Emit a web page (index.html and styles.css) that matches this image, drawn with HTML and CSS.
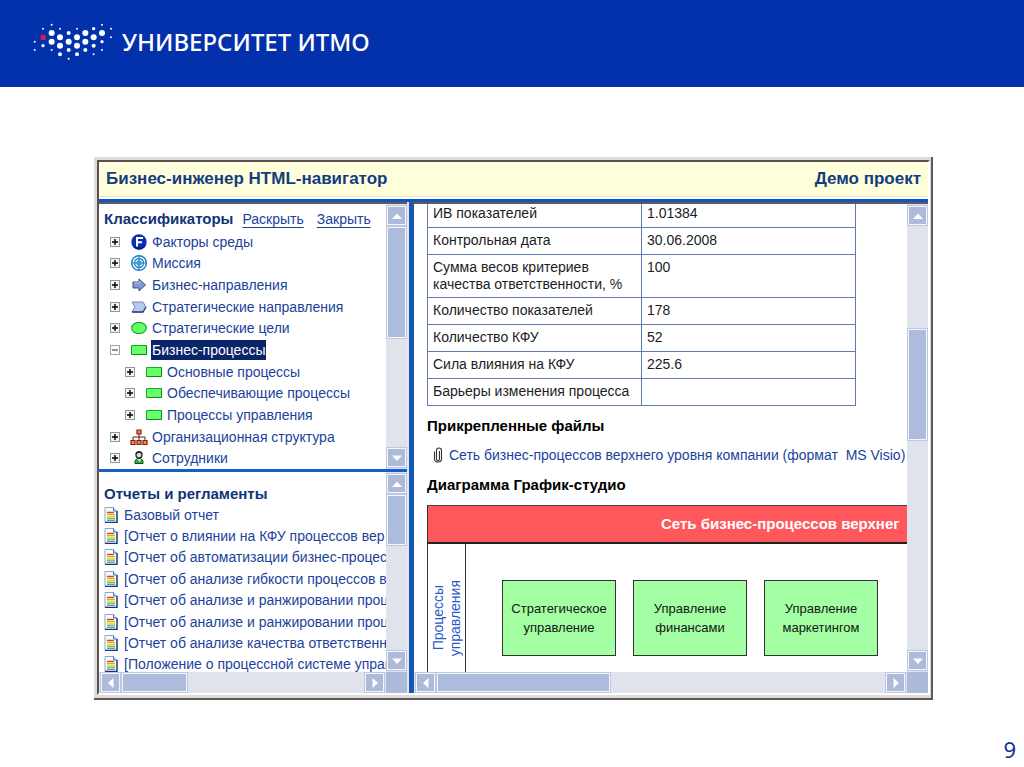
FILE: index.html
```html
<!DOCTYPE html>
<html lang="ru">
<head>
<meta charset="utf-8">
<title>Университет ИТМО</title>
<link rel="stylesheet" href="styles.css">
</head>
<body>
<svg class="sprite" aria-hidden="true">
  <symbol id="plus" viewBox="0 0 10 10"><rect x=".5" y=".5" width="9" height="9" fill="#f4f4f0" stroke="#8c98ac"/><path d="M2 5h6M5 2v6" stroke="#000" stroke-width="1.4"/></symbol>
  <symbol id="minus" viewBox="0 0 10 10"><rect x=".5" y=".5" width="9" height="9" fill="#fbfbf8" stroke="#9aa6b8"/><path d="M2 5h6" stroke="#333"/></symbol>
  <symbol id="factor" viewBox="0 0 18 18"><circle cx="9" cy="9" r="7.7" fill="#0a2fb4"/><path d="M4 13.500a7 7 0 0 0 11-1" fill="none" stroke="#04186e" stroke-width="1.500"/><path d="M7 13.500V5h6M7 9.200h5" fill="none" stroke="#fff" stroke-width="2"/></symbol>
  <symbol id="mission" viewBox="0 0 18 18"><g fill="none" stroke="#1e84c4"><circle cx="9" cy="9" r="7.300" stroke-width="1.500"/><circle cx="9" cy="9" r="4.500" fill="#c8e8f6" stroke-width="1.300"/><circle cx="9" cy="9" r="2"/><path d="M9 1v16M1 9h16"/></g></symbol>
  <symbol id="arrow" viewBox="0 0 18 18"><path d="M3 6h6V3l6.500 6L9 15v-3H3z" fill="#7d9bd0" stroke="#3a4f80"/><path d="M4 7h6V5" fill="none" stroke="#b9caea"/></symbol>
  <symbol id="chevron" viewBox="0 0 18 18"><path d="M2 4h11l3 5-3 5H2l3-5z" fill="#b4c8f0" stroke="#7488b4"/><path d="M2 14h11l3-5" fill="none" stroke="#28407c" stroke-width="1.300"/></symbol>
  <symbol id="goal" viewBox="0 0 18 18"><ellipse cx="9" cy="9" rx="7.300" ry="5.600" fill="#66ff66" stroke="#16a82c" stroke-width="1.200"/></symbol>
  <symbol id="process" viewBox="0 0 18 18"><path d="M1.500 4.500h15v9h-15z" fill="#66ff66" stroke="#16a82c"/><path d="M1.500 13.500h15v-9" fill="none" stroke="#0a8c1c"/></symbol>
  <symbol id="org" viewBox="0 0 18 18"><path d="M9 6v3M3 12V9h12v3M9 9v3" fill="none" stroke="#5a2015"/><g fill="#f0903c" stroke="#8c1c10" stroke-width="1.200"><path d="M7 2h4v4H7zM1 12.500h4v4H1zM7 12.500h4v4H7zM13 12.500h4v4h-4z"/></g></symbol>
  <symbol id="person" viewBox="0 0 18 18"><path d="M5 14.500c-.5-3 1-5 4-5s4.500 2 4 5z" fill="#2faa3c" stroke="#14481c"/><path d="M7 10l3 3 1-3z" fill="#d6f5d4"/><circle cx="9" cy="6" r="3" fill="#dedbd4" stroke="#2a2a2a" stroke-width="1.300"/><path d="M6 5c1-3 5-3 6 0" fill="none" stroke="#222" stroke-width="1.400"/></symbol>
  <symbol id="doc" viewBox="0 0 14 16"><path d="M1 .500h8.500l3.500 3.500v11.500H1z" fill="#f7fcff" stroke="#86a8cc"/><path d="M1 15.500h12V4" fill="none" stroke="#13346e" stroke-width="1.300"/><path d="M9.500 .500V4H13" fill="#cfe4f4" stroke="#3c78b4"/><path d="M3 5.500h7" stroke="#d8402c" stroke-width="1.500"/><path d="M3 7.500h8" stroke="#f09a50"/><path d="M3 9.200h8" stroke="#d8f020" stroke-width="1.700"/><path d="M3 11.200h8" stroke="#64c040" stroke-width="1.300"/><path d="M3 13.200h8" stroke="#4060a0"/></symbol>
  <symbol id="clip" viewBox="0 0 10 16"><path d="M6.500 4v8a1.500 1.500 0 0 1-3 0V3.500a2.500 2.500 0 0 1 5 0V12c0 4-7 4-7 0V4.500" fill="none" stroke="#333" stroke-width="1.100"/></symbol>
  <symbol id="up" viewBox="0 0 12 12"><path d="M1 9L6 3.500l5 5.500z" fill="#fff"/></symbol>
  <symbol id="down" viewBox="0 0 12 12"><path d="M1 3.500L6 9l5-5.500z" fill="#fff"/></symbol>
  <symbol id="left" viewBox="0 0 12 12"><path d="M8.500 1L3 6l5.500 5z" fill="#fff"/></symbol>
  <symbol id="right" viewBox="0 0 12 12"><path d="M3.500 1L9 6l-5.500 5z" fill="#fff"/></symbol>
</svg>

<div class="slide">
  <header class="brand">
    <svg class="brand-mark" viewBox="99 69 240 120" fill="#fff" aria-hidden="true">
      <rect x="122" y="108" width="15" height="15" rx="2" fill="#d8174a"/>
      <circle cx="104" cy="128" r="3"/><circle cx="104" cy="153" r="3"/>
      <circle cx="129" cy="89" r="3"/><circle cx="129" cy="140" r="5"/>
      <circle cx="155" cy="77" r="3"/><circle cx="155" cy="102" r="9"/><circle cx="155" cy="128" r="9"/><circle cx="155" cy="153" r="3"/>
      <circle cx="180" cy="89" r="3"/><circle cx="180" cy="115" r="9"/><circle cx="180" cy="140" r="9"/><circle cx="180" cy="166" r="6"/>
      <circle cx="206" cy="102" r="6"/><circle cx="206" cy="128" r="9"/><circle cx="206" cy="153" r="6"/><circle cx="206" cy="179" r="3"/>
      <circle cx="231" cy="89" r="3"/><circle cx="231" cy="115" r="9"/><circle cx="231" cy="140" r="9"/><circle cx="231" cy="166" r="6"/>
      <circle cx="256" cy="102" r="9"/><circle cx="256" cy="128" r="9"/><circle cx="256" cy="153" r="6"/>
      <circle cx="281" cy="89" r="5"/><circle cx="281" cy="115" r="9"/><circle cx="281" cy="140" r="6"/><circle cx="281" cy="166" r="3"/>
      <circle cx="306" cy="77" r="3"/><circle cx="306" cy="102" r="9"/><circle cx="306" cy="128" r="5"/><circle cx="306" cy="153" r="3"/>
      <circle cx="333" cy="89" r="3"/><circle cx="333" cy="115" r="3"/>
    </svg>
    <span class="brand-name">УНИВЕРСИТЕТ ИТМО</span>
  </header>

  <main class="stage">
    <div class="window">
      <div class="app">
        <div class="titlebar">
          <h1>Бизнес-инженер HTML-навигатор</h1>
          <span>Демо проект</span>
        </div>
        <div class="workspace">
          <div class="sidebar">
            <section class="pane classifiers">
              <div class="pane-body">
                <div class="pane-head">
                  <h2>Классификаторы</h2>
                  <a href="#">Раскрыть</a>
                  <a href="#">Закрыть</a>
                </div>
                <ul class="tree">
                  <li><button class="toggle" aria-label="Развернуть"><svg><use href="#plus"/></svg></button><svg class="icon"><use href="#factor"/></svg><a href="#">Факторы среды</a></li>
                  <li><button class="toggle" aria-label="Развернуть"><svg><use href="#plus"/></svg></button><svg class="icon"><use href="#mission"/></svg><a href="#">Миссия</a></li>
                  <li><button class="toggle" aria-label="Развернуть"><svg><use href="#plus"/></svg></button><svg class="icon"><use href="#arrow"/></svg><a href="#">Бизнес-направления</a></li>
                  <li><button class="toggle" aria-label="Развернуть"><svg><use href="#plus"/></svg></button><svg class="icon"><use href="#chevron"/></svg><a href="#">Стратегические направления</a></li>
                  <li><button class="toggle" aria-label="Развернуть"><svg><use href="#plus"/></svg></button><svg class="icon"><use href="#goal"/></svg><a href="#">Стратегические цели</a></li>
                  <li><button class="toggle" aria-label="Свернуть"><svg><use href="#minus"/></svg></button><svg class="icon"><use href="#process"/></svg><a href="#" class="selected">Бизнес-процессы</a></li>
                  <li class="child"><button class="toggle" aria-label="Развернуть"><svg><use href="#plus"/></svg></button><svg class="icon"><use href="#process"/></svg><a href="#">Основные процессы</a></li>
                  <li class="child"><button class="toggle" aria-label="Развернуть"><svg><use href="#plus"/></svg></button><svg class="icon"><use href="#process"/></svg><a href="#">Обеспечивающие процессы</a></li>
                  <li class="child"><button class="toggle" aria-label="Развернуть"><svg><use href="#plus"/></svg></button><svg class="icon"><use href="#process"/></svg><a href="#">Процессы управления</a></li>
                  <li><button class="toggle" aria-label="Развернуть"><svg><use href="#plus"/></svg></button><svg class="icon"><use href="#org"/></svg><a href="#">Организационная структура</a></li>
                  <li><button class="toggle" aria-label="Развернуть"><svg><use href="#plus"/></svg></button><svg class="icon"><use href="#person"/></svg><a href="#">Сотрудники</a></li>
                </ul>
              </div>
              <div class="bar vertical">
                <button aria-label="Вверх"><svg><use href="#up"/></svg></button>
                <div class="thumb thumb-tree"></div>
                <button class="end" aria-label="Вниз"><svg><use href="#down"/></svg></button>
              </div>
            </section>

            <section class="pane reports">
              <div class="pane-body">
                <div class="pane-head"><h2>Отчеты и регламенты</h2></div>
                <ul class="files">
                  <li><svg class="doc"><use href="#doc"/></svg><a href="#">Базовый отчет</a></li>
                  <li><svg class="doc"><use href="#doc"/></svg><a href="#">[Отчет о влиянии на КФУ процессов вер</a></li>
                  <li><svg class="doc"><use href="#doc"/></svg><a href="#">[Отчет об автоматизации бизнес-процесс</a></li>
                  <li><svg class="doc"><use href="#doc"/></svg><a href="#">[Отчет об анализе гибкости процессов ве</a></li>
                  <li><svg class="doc"><use href="#doc"/></svg><a href="#">[Отчет об анализе и ранжировании проце</a></li>
                  <li><svg class="doc"><use href="#doc"/></svg><a href="#">[Отчет об анализе и ранжировании проце</a></li>
                  <li><svg class="doc"><use href="#doc"/></svg><a href="#">[Отчет об анализе качества ответственно</a></li>
                  <li><svg class="doc"><use href="#doc"/></svg><a href="#">[Положение о процессной системе управ</a></li>
                </ul>
              </div>
              <div class="bar vertical">
                <button aria-label="Вверх"><svg><use href="#up"/></svg></button>
                <div class="thumb thumb-reports"></div>
                <button class="end" aria-label="Вниз"><svg><use href="#down"/></svg></button>
              </div>
              <div class="bar horizontal">
                <button aria-label="Влево"><svg><use href="#left"/></svg></button>
                <div class="thumb thumb-side"></div>
                <button class="end" aria-label="Вправо"><svg><use href="#right"/></svg></button>
              </div>
              <div class="corner"></div>
            </section>
          </div>

          <section class="pane details">
            <div class="pane-body">
              <table class="props">
                <tr><th scope="row">ИВ показателей</th><td>1.01384</td></tr>
                <tr><th scope="row">Контрольная дата</th><td>30.06.2008</td></tr>
                <tr><th scope="row">Сумма весов критериев<br>качества ответственности, %</th><td>100</td></tr>
                <tr><th scope="row">Количество показателей</th><td>178</td></tr>
                <tr><th scope="row">Количество КФУ</th><td>52</td></tr>
                <tr><th scope="row">Сила влияния на КФУ</th><td>225.6</td></tr>
                <tr><th scope="row">Барьеры изменения процесса</th><td></td></tr>
              </table>
              <h3>Прикрепленные файлы</h3>
              <div class="attachment"><svg class="clip"><use href="#clip"/></svg><a href="#">Сеть бизнес-процессов верхнего уровня компании (формат&nbsp; MS Visio)</a></div>
              <h3>Диаграмма График-студио</h3>
              <div class="diagram">
                <div class="diagram-title">Сеть бизнес-процессов верхнег</div>
                <div class="lane">
                  <div class="lane-name"><span>Процессы<br>управления</span></div>
                  <div class="node">Стратегическое<br>управление</div>
                  <div class="node">Управление<br>финансами</div>
                  <div class="node">Управление<br>маркетингом</div>
                </div>
              </div>
            </div>
            <div class="bar vertical">
              <button aria-label="Вверх"><svg><use href="#up"/></svg></button>
              <div class="thumb thumb-details"></div>
              <button class="end" aria-label="Вниз"><svg><use href="#down"/></svg></button>
            </div>
            <div class="bar horizontal">
              <button aria-label="Влево"><svg><use href="#left"/></svg></button>
              <div class="thumb thumb-wide"></div>
              <button class="end" aria-label="Вправо"><svg><use href="#right"/></svg></button>
            </div>
            <div class="corner"></div>
          </section>
        </div>
      </div>
    </div>
  </main>
  <footer class="page-number">9</footer>
</div>
</body>
</html>
```
FILE: styles.css
```css
* { box-sizing: border-box; }
body { margin: 0; background: #fff; font-family: "Liberation Sans", Arial, sans-serif; }
h1, h2, h3, ul { margin: 0; padding: 0; }
ul { list-style: none; }
a { color: #1c429c; text-decoration: none; }
button { padding: 0; border: 0; background: none; }
svg { display: block; flex: none; }
.sprite { display: none; }

.slide { display: flex; flex-direction: column; min-height: 100vh; }
.brand { display: flex; align-items: center; gap: 9px; height: 87px; padding: 0 33px 3px; background: #0330ab; color: #fff; }
.brand-mark { width: 80px; height: 40px; }
.brand-name { font: 500 24px/32px "Noto Sans", sans-serif; }
.stage { flex: 1; padding: 70px 91px 0 94px; }
.page-number { padding: 0 8px 4px; text-align: right; font: 22px/28px "Noto Sans", sans-serif; color: #12309c; }

.window { padding: 3px 1px 3px 3px; background: #dedbd8; border-right: 2px solid #5c5858; border-bottom: 2px solid #5c5858; }
.app { border: 2px solid #5a5252; border-right-color: #fff; border-bottom-color: #fff; background: #fff; }
.titlebar { display: flex; align-items: center; justify-content: space-between; height: 35px; padding: 0 7px; background: #ffffdb; border-bottom: 1px solid #e4e4d8; color: #123c80; font-size: 17px; font-weight: bold; }
.titlebar h1 { font-size: 17px; }
.workspace { display: grid; grid-template-columns: 310px minmax(0, 1fr); border-top: 3px solid #0f56c0; margin-top: 2px; }
.sidebar { display: grid; grid-template-rows: 267px minmax(0, 1fr); border-right: 2px solid #e4e8f2; }

.pane { display: grid; grid-template-columns: minmax(0, 1fr) 21px; grid-template-rows: minmax(0, 1fr); border-top: 2px solid #5a5a62; min-width: 0; }
.reports, .details { grid-template-rows: minmax(0, 1fr) 21px; }
.reports { border-top: 3px solid #0f62cc; }
.details { height: 491px; border-left: 5px solid #1458b4; }
.pane-body { display: flex; flex-direction: column; min-width: 0; overflow: hidden; }
.sidebar .pane-body { padding-left: 5px; font-size: 14px; white-space: nowrap; }
.pane-head { display: flex; align-items: center; gap: 13px; flex: none; height: 27px; padding-top: 2px; }
.pane-head h2 { font-size: 15px; color: #0f3578; }
.pane-head h2 + a { margin-left: -4px; }
.pane-head a { text-decoration: underline; text-underline-offset: 3px; }

.tree { display: grid; flex: 1; grid-auto-rows: minmax(0, 1fr); padding-left: 6px; }
.tree li, .files li { display: flex; align-items: center; }
.tree .child { padding-left: 15px; }
.toggle svg { width: 10px; height: 10px; }
.tree .icon { width: 18px; height: 18px; margin: 0 3px 0 10px; }
.tree a { padding: 2px 1px; line-height: 16px; }
.tree .selected { background: #0a246a; color: #fff; }

.reports .pane-head { height: 32px; padding-top: 10px; }
.files { display: grid; flex: 1; grid-auto-rows: minmax(0, 1fr); margin-bottom: -3px; }
.doc { width: 14px; height: 16px; margin-right: 6px; }

.bar { display: flex; background: #e0e3ec; }
.vertical { flex-direction: column; padding: 1px 0; }
.horizontal { padding: 0 1px; }
.bar button { display: flex; align-items: center; justify-content: center; width: 19px; height: 19px; flex: none; background: #adbad9; border: 1px solid #f4f6fb; outline: 1px solid #bcc8e0; margin: 1px; }
.bar button svg { width: 12px; height: 12px; }
.bar .end { margin-top: auto; }
.horizontal .end { margin: 1px 1px 1px auto; }
.thumb { flex: none; background: #adbbdc; border: 1px solid #f4f6fb; outline: 1px solid #bcc8e0; margin: 1px; }
.thumb-tree { height: 111px; }
.thumb-reports { height: 50px; }
.thumb-side { width: 65px; }
.thumb-details { height: 111px; margin-top: 103px; }
.thumb-wide { width: 173px; }
.corner { background: #adbad9; }

.details .pane-body { padding-left: 13px; }
.props { width: 429px; flex: none; margin-top: -4px; border-collapse: collapse; font-size: 14px; line-height: 17px; color: #1c1c24; }
.props th, .props td { height: 27px; padding: 4px 5px; border: 1px solid #6078b4; text-align: left; vertical-align: top; font-weight: normal; }
.props th { width: 214px; white-space: nowrap; }
.details h3 { padding-top: 10px; font-size: 15px; line-height: 20px; color: #000; }
.attachment { display: flex; align-items: center; gap: 6px; height: 20px; margin: 9px 0 0 6px; font-size: 14px; white-space: nowrap; }
.clip { width: 10px; height: 16px; }
.diagram { display: flex; flex-direction: column; flex: 1; margin-top: 10px; border-left: 1px solid #333; white-space: nowrap; }
.diagram-title { flex: none; height: 39px; padding-left: 233px; overflow: hidden; background: #ff585c; border-top: 1px solid #444; border-bottom: 2px solid #222; color: #fff; font-size: 15px; font-weight: bold; line-height: 36px; }
.lane { display: flex; flex: 1; gap: 17px; align-items: flex-start; }
.lane-name { display: flex; justify-content: center; align-self: stretch; flex: none; width: 38px; margin-right: 19px; padding-top: 20px; border-right: 1px solid #333; color: #2c58c8; }
.lane-name span { writing-mode: vertical-rl; transform: rotate(180deg); align-self: center; text-align: center; font-size: 14px; line-height: 17px; }
.node { display: flex; align-items: center; justify-content: center; flex: none; width: 114px; height: 76px; margin-top: 36px; background: #a4ffa4; border: 1px solid #333; color: #101810; text-align: center; font-size: 13px; line-height: 19px; }
```
